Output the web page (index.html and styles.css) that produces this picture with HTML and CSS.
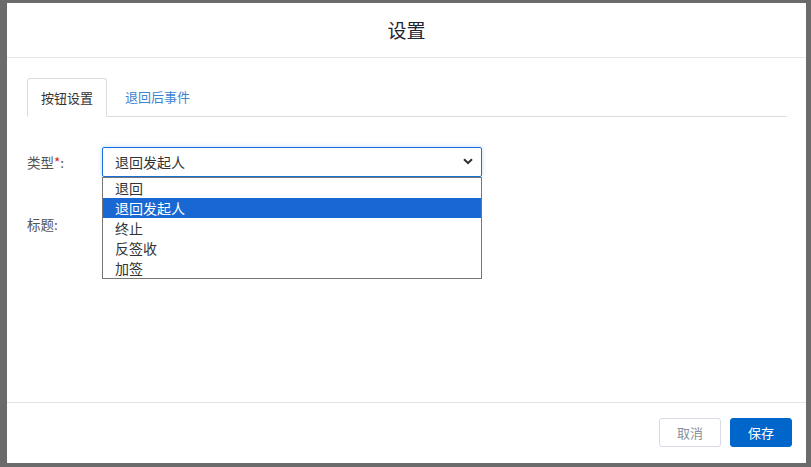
FILE: index.html
```html
<!DOCTYPE html>
<html lang="zh-CN">
<head>
<meta charset="utf-8">
<title>设置</title>
<link rel="stylesheet" href="styles.css">
</head>
<body>
<div class="modal">
  <div class="modal-header">设置</div>
  <div class="modal-body">
    <div class="tabs">
      <div class="tab active">按钮设置</div>
      <div class="tab">退回后事件</div>
    </div>
    <div class="form">
      <div class="row">
        <div class="label">类型<span class="req">*</span>:</div>
        <div class="select-wrap">
          <div class="select">
            <span>退回发起人</span>
            <svg class="chev" width="10" height="7" viewBox="0 0 10 7"><path d="M1 1.2 L5 5 L9 1.2" fill="none" stroke="#333" stroke-width="2"/></svg>
          </div>
          <div class="dropdown">
            <div class="opt">退回</div>
            <div class="opt sel">退回发起人</div>
            <div class="opt">终止</div>
            <div class="opt">反签收</div>
            <div class="opt">加签</div>
          </div>
        </div>
      </div>
      <div class="row">
        <div class="label">标题:</div>
      </div>
    </div>
  </div>
  <div class="modal-footer">
    <button class="btn btn-cancel">取消</button>
    <button class="btn btn-primary">保存</button>
  </div>
</div>
</body>
</html>
```
FILE: styles.css
```css
* { box-sizing: border-box; }
html, body { margin: 0; padding: 0; }
body {
  background: #6b6b6b;
  width: 811px;
  height: 467px;
  overflow: hidden;
  font-family: "Microsoft YaHei", "Noto Sans CJK SC", "Noto Sans", sans-serif;
  padding: 3px 5px 0 7px;
}
.modal {
  width: 799px;
  height: 460px;
  background: #fff;
  display: flex;
  flex-direction: column;
}
.modal-header {
  height: 55px;
  border-bottom: 1px solid #e6e6ea;
  display: flex;
  align-items: center;
  justify-content: center;
  font-size: 19px;
  color: #1d2536;
  padding-bottom: 2px;
  flex: none;
}
.modal-body {
  flex: 1;
  padding: 20px 19px 0 20px;
}
.tabs {
  display: flex;
  border-bottom: 1px solid #dcdcdc;
  height: 39px;
}
.tab {
  height: 38px;
  padding: 0 15px 0 15px;
  font-size: 13px;
  line-height: 38px;
  color: #3d85d1;
}
.tab.active {
  color: #333;
  border: 1px solid #dcdcdc;
  border-bottom: 1px solid #fff;
  border-radius: 3px 3px 0 0;
  height: 39px;
  width: 80px;
  padding: 0 0 0 0;
  text-align: center;
}
.tab + .tab { padding-left: 18px; }
.form {
  padding-top: 30px;
}
.row {
  display: flex;
  align-items: center;
  height: 29px;
  margin-bottom: 33px;
}
.label {
  width: 75px;
  font-size: 13.5px;
  color: #555;
}
.req { color: #e02020; }
.select-wrap {
  position: relative;
  width: 380px;
}
.select {
  height: 30px;
  border: 1px solid #1a6ed8;
  border-radius: 2px;
  box-shadow: 0 0 5px rgba(26, 110, 216, 0.25);
  display: flex;
  align-items: center;
  justify-content: space-between;
  padding: 0 8px 0 12px;
  font-size: 14px;
  color: #333;
}
.chev { display: block; }
.dropdown {
  position: absolute;
  left: 0;
  top: 30px;
  width: 380px;
  border: 1px solid #767676;
  background: #fff;
  z-index: 5;
}
.opt {
  height: 20px;
  line-height: 20px;
  padding-left: 12px;
  font-size: 14px;
  color: #333;
}
.opt.sel {
  background: #1967d2;
  color: #fff;
}
.modal-footer {
  height: 61px;
  border-top: 1px solid #e3e3e6;
  flex: none;
  display: flex;
  justify-content: flex-end;
  align-items: flex-start;
  padding: 15px 14px 0 0;
  gap: 9px;
}
.btn {
  height: 29px;
  width: 62px;
  border-radius: 3px;
  font-family: inherit;
  font-size: 13px;
  padding: 0;
  cursor: pointer;
}
.btn-cancel {
  background: #fff;
  border: 1px solid #d6dbe5;
  color: #8a8f99;
}
.btn-primary {
  background: #0066cc;
  border: 1px solid #0066cc;
  color: #fff;
}
```
